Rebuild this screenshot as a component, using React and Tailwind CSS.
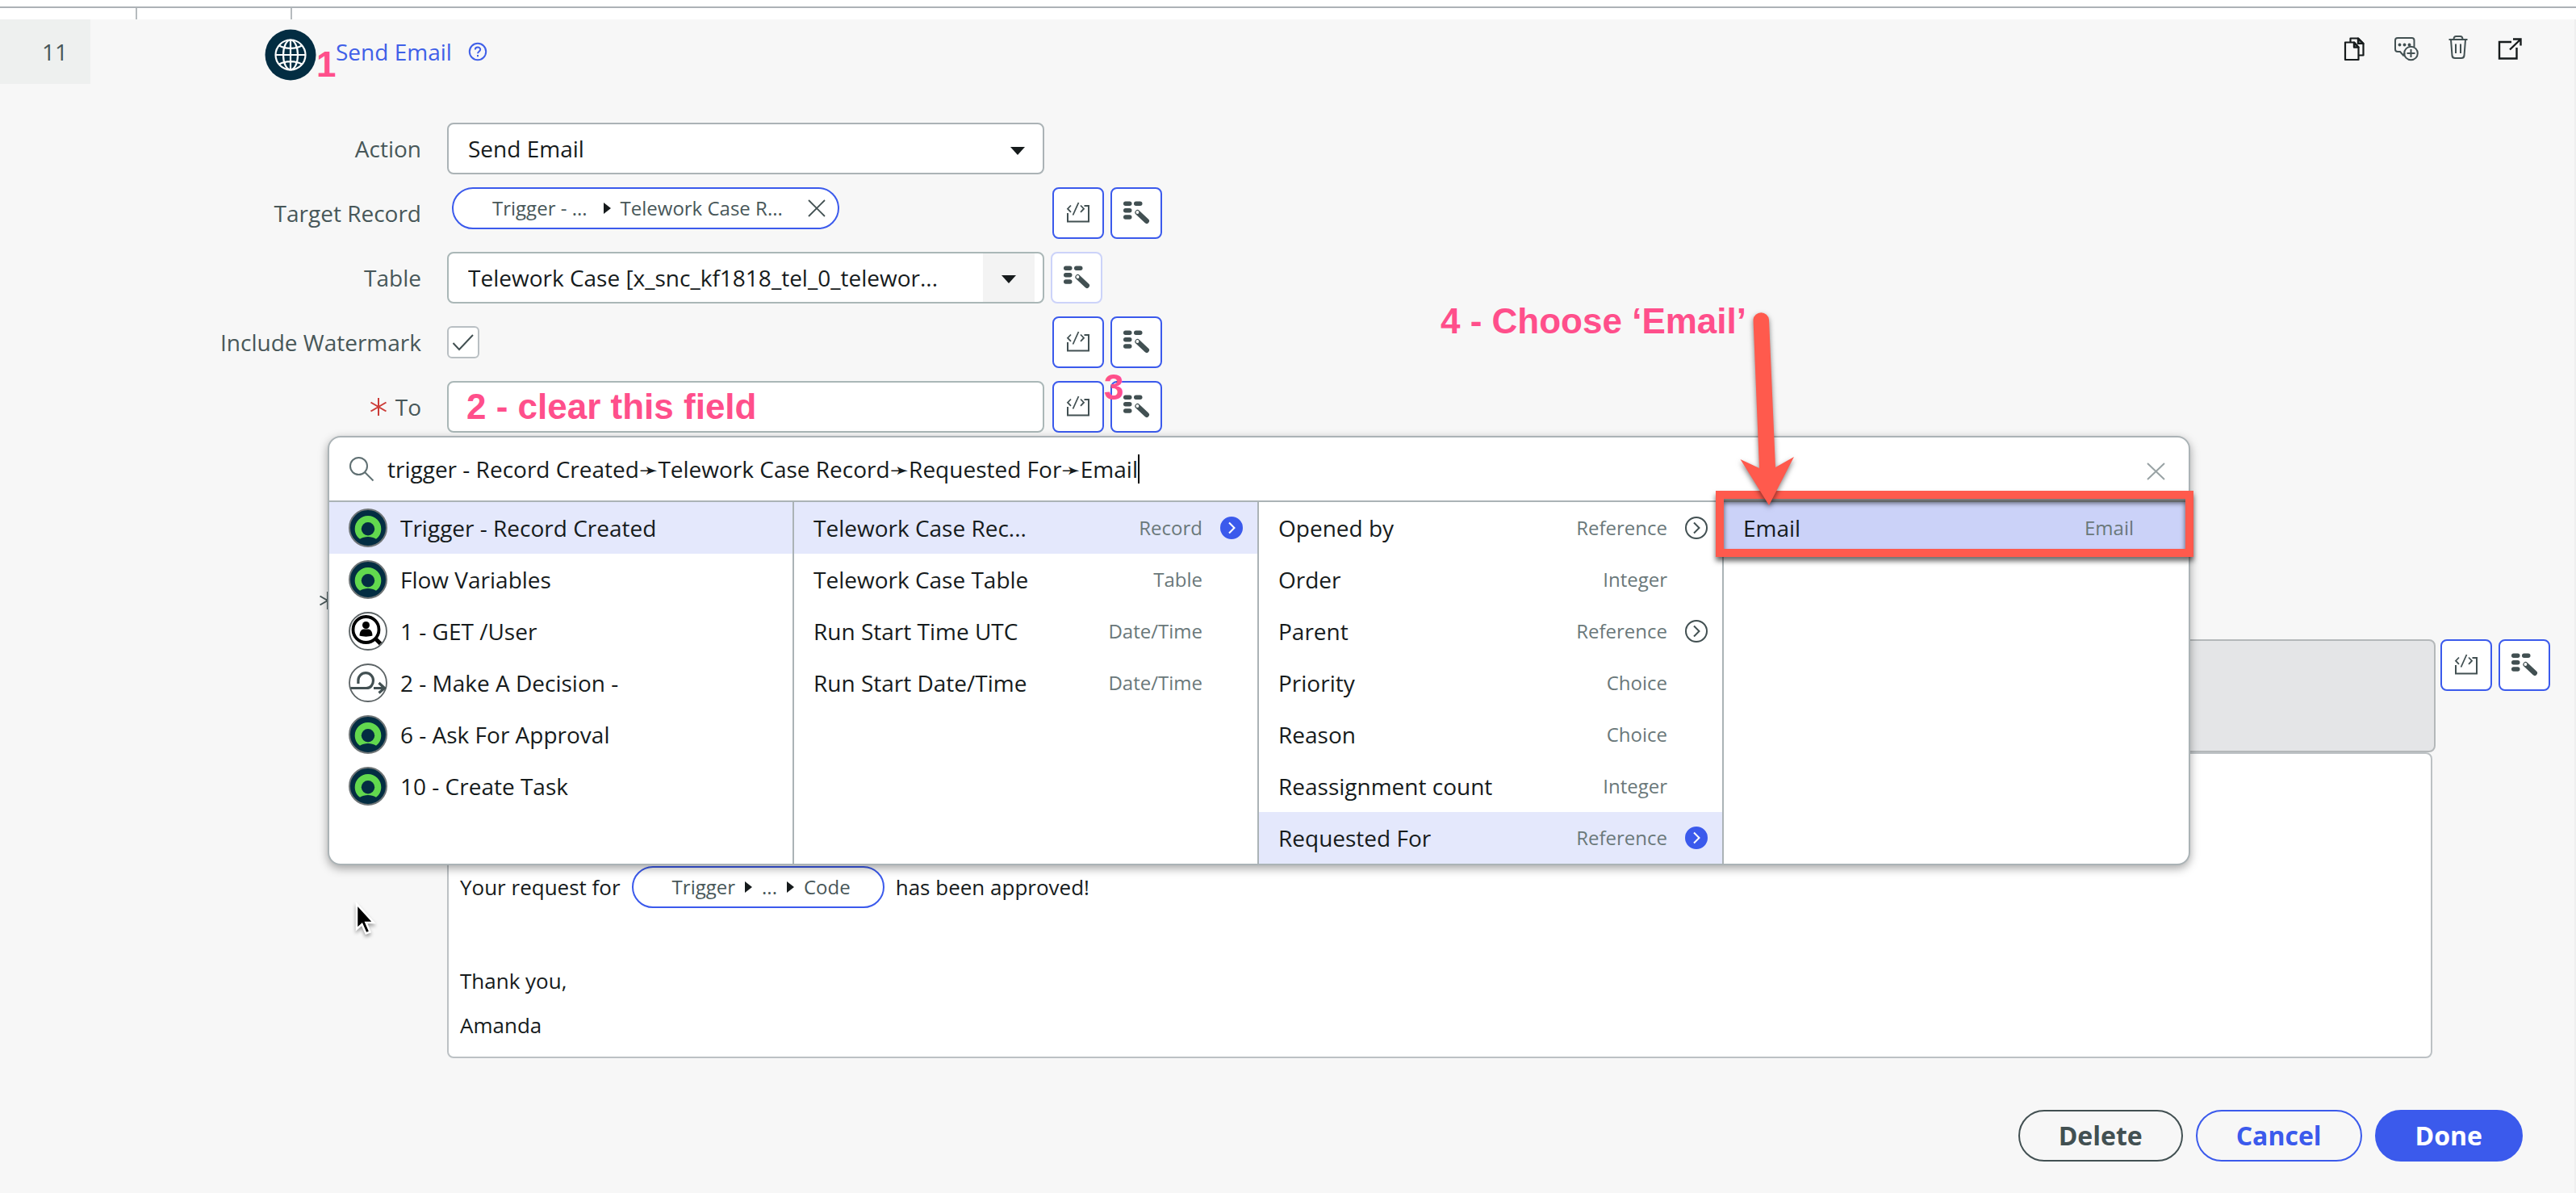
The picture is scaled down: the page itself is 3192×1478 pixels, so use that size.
import React from "react";

const SANS = "font-['Open_Sans','DejaVu_Sans',sans-serif]";
const NOTE = "font-['Liberation_Sans',sans-serif] text-[44px] leading-[44px] font-bold whitespace-nowrap text-[#ff4f8b]";

function CodeIcon() {
  return (
    <svg width="60" height="60" viewBox="2 2 60 60" fill="none" stroke="#425052" strokeWidth="2" aria-hidden="true">
      <path d="M19 32v10.500h26V23h-5.500" />
      <path d="M23 22.500l-4 4.200 4 4.200M35 22.500l4 4.200-4 4.200M32.500 19L25.500 34.500" strokeWidth="1.800" />
    </svg>
  );
}

function PickerIcon() {
  return (
    <svg width="60" height="60" viewBox="2 2 60 60" fill="#425052" aria-hidden="true">
      <rect x="16" y="17.500" width="10.500" height="5.500" rx="2.700" />
      <rect x="29" y="17.500" width="10.500" height="5.500" rx="2.700" />
      <rect x="16" y="26" width="10.500" height="5.500" rx="2.700" />
      <rect x="16" y="34.300" width="10.500" height="5.500" rx="2.700" />
      <path d="M33.600 31.200L44.800 41.800" stroke="#425052" strokeWidth="6.400" strokeLinecap="round" />
      <circle cx="33.400" cy="31" r="1.900" fill="#fff" />
    </svg>
  );
}

function IconButton({ label, pale, children }) {
  return (
    <button
      type="button"
      aria-label={label}
      className={
        "flex size-16 shrink-0 items-center justify-center rounded-lg border-2 bg-white " +
        (pale ? "border-[#ccd3f9]" : "border-[#3b5aec]")
      }
    >
      {children}
    </button>
  );
}

function ToolPair() {
  return (
    <div className="flex gap-2">
      <IconButton label="Toggle scripting"><CodeIcon /></IconButton>
      <IconButton label="Data pill picker"><PickerIcon /></IconButton>
    </div>
  );
}

function Asterisk({ color }) {
  return (
    <svg width="22" height="24" viewBox="0 0 22 24" fill="none" stroke={color} strokeWidth="2" aria-hidden="true">
      <path d="M11 1v22M1.500 6.500l19 11M20.500 6.500l-19 11" />
    </svg>
  );
}

function Triangle() {
  return (
    <svg width="9" height="14" viewBox="0 0 9 14" fill="#161b1c" aria-hidden="true">
      <path d="M0 0l9 7-9 7z" />
    </svg>
  );
}

function Caret() {
  return (
    <svg width="18" height="10" viewBox="0 0 18 10" fill="#161b1c" aria-hidden="true">
      <path d="M0 0h18l-9 10z" />
    </svg>
  );
}

function Row({ label, htmlFor, required, children }) {
  return (
    <div className="grid min-h-16 grid-cols-[522px_1fr] items-center gap-8">
      <div className="flex items-center justify-end gap-2.5">
        {required && <Asterisk color="#cc3b37" />}
        <label htmlFor={htmlFor} className="text-[28px] leading-9 text-[#485759]">{label}</label>
      </div>
      {children}
    </div>
  );
}

function NowLogo() {
  return (
    <svg width="48" height="48" viewBox="0 0 48 48" aria-hidden="true">
      <circle cx="24" cy="24" r="23" fill="#032d42" stroke="#6f7577" strokeWidth="2" />
      <path fill="#62d84e" d="M14 37.800C9.700 35 7.700 30 7.700 25.300a16.300 16.300 0 0 1 32.600 0c0 4.700-2 9.700-6.300 12.500-6-3.700-14-3.700-20 0z" />
      <circle cx="24" cy="25.300" r="8.200" fill="#032d42" />
    </svg>
  );
}

function UserLookupIcon() {
  return (
    <svg width="48" height="48" viewBox="0 0 48 48" aria-hidden="true">
      <circle cx="24" cy="24" r="23" fill="#fff" stroke="#5d6466" strokeWidth="1.800" />
      <circle cx="21.500" cy="22" r="16" fill="none" stroke="#000" strokeWidth="3.800" />
      <path d="M33 33l6.500 6.500" stroke="#000" strokeWidth="5" />
      <circle cx="21.500" cy="16.500" r="4.500" />
      <path d="M13.500 29.500c0-5 2.500-8 5-8h6c2.500 0 5 3 5 8-4 1.500-12 1.500-16 0z" />
    </svg>
  );
}

function DecisionIcon() {
  return (
    <svg width="48" height="48" viewBox="0 0 48 48" fill="none" stroke="#425052" strokeWidth="3.200" aria-hidden="true">
      <circle cx="24" cy="24" r="23" fill="#fff" stroke="#5d6466" strokeWidth="1.800" />
      <path d="M2.500 30.500H22c5 0 8.500-4 8.500-9.500a9.300 9.300 0 0 0-18.600 0v4" />
      <path d="M31 30.500h13M37.500 24l7 6.500-7 6" />
    </svg>
  );
}

function Drill({ filled }) {
  return (
    <svg width="28" height="28" viewBox="0 0 28 28" fill="none" aria-hidden="true">
      <circle cx="14" cy="14" r="13" fill={filled ? "#3b5aec" : "#fff"} stroke={filled ? "#3b5aec" : "#425052"} strokeWidth="2" />
      <path d="M11 7.500l6.500 6.500-6.500 6.500" stroke={filled ? "#fff" : "#425052"} strokeWidth="2" />
    </svg>
  );
}

function Pick({ icon, name, type, drill, tone }) {
  return (
    <button
      type="button"
      className={"flex h-16 w-full items-center pl-6 text-left " + (tone || "")}
    >
      {icon && <span className="mr-4">{icon}</span>}
      <span className="text-[28px] leading-9 text-[#161b1c]">{name}</span>
      <span className="ml-auto text-[24px] leading-8 text-[#6a787a]">{type}</span>
      <span className="mr-[18px] ml-[22px] flex w-7">{drill && <Drill filled={drill === "on"} />}</span>
    </button>
  );
}

const STEPS = [
  { icon: <NowLogo />, name: "Trigger - Record Created", tone: "bg-[#e4e8fc]" },
  { icon: <NowLogo />, name: "Flow Variables" },
  { icon: <UserLookupIcon />, name: "1 - GET /User" },
  { icon: <DecisionIcon />, name: "2 - Make A Decision -" },
  { icon: <NowLogo />, name: "6 - Ask For Approval" },
  { icon: <NowLogo />, name: "10 - Create Task" },
];

const OUTPUTS = [
  { name: "Telework Case Rec...", type: "Record", drill: "on", tone: "bg-[#e4e8fc]" },
  { name: "Telework Case Table", type: "Table" },
  { name: "Run Start Time UTC", type: "Date/Time" },
  { name: "Run Start Date/Time", type: "Date/Time" },
];

const FIELDS = [
  { name: "Opened by", type: "Reference", drill: "off" },
  { name: "Order", type: "Integer" },
  { name: "Parent", type: "Reference", drill: "off" },
  { name: "Priority", type: "Choice" },
  { name: "Reason", type: "Choice" },
  { name: "Reassignment count", type: "Integer" },
  { name: "Requested For", type: "Reference", drill: "on", tone: "bg-[#e4e8fc]" },
];

function Callout() {
  return (
    <>
      <div className="pointer-events-none absolute -top-3.5 -right-1.5 -bottom-1 -left-2.5 border-10 border-[#ff5a4d] drop-shadow-[0_5px_3px_rgba(0,0,0,0.6)]" />
      <svg className="pointer-events-none absolute -top-60 left-4 drop-shadow-[0_3px_3px_rgba(0,0,0,0.5)]" width="80" height="250" viewBox="2152 382 80 250" fill="#ff5a4d" aria-hidden="true">
        <path d="M2172.500 396a9.800 9.800 0 0 1 19.500 0l8 183 23-13-31 60-35.500-57 23.500 11z" />
      </svg>
      <span className={NOTE + " absolute right-full bottom-[266px] -mr-7"}>4 - Choose ‘Email’</span>
    </>
  );
}

function PillPicker() {
  return (
    <div className="absolute top-[516px] right-[476px] left-[406px] rounded-2xl border-2 border-[#abb3b6] bg-white shadow-[0_4px_12px_rgba(0,0,0,0.35)]">
      <div className="flex h-20 items-center border-b-2 border-[#abb3b6] pr-7 pl-6">
        <svg width="32" height="32" viewBox="0 0 32 32" fill="none" stroke="#5f6f72" strokeWidth="2" aria-hidden="true">
          <circle cx="12.500" cy="12.500" r="10.500" />
          <path d="M20 20l10.500 10.500" />
        </svg>
        <input
          aria-label="Search data pills"
          className="ml-4 field-sizing-content text-[28px] leading-9 text-[#161b1c] outline-none"
          defaultValue="trigger - Record Created➛Telework Case Record➛Requested For➛Email"
        />
        <span className="h-9 w-0.5 bg-black" />
        <button type="button" aria-label="Close" className="ml-auto pt-1">
          <svg width="24" height="24" viewBox="0 0 24 24" stroke="#98a2a4" strokeWidth="2" aria-hidden="true">
            <path d="M1 3l21 20M22 3L1 23" />
          </svg>
        </button>
      </div>
      <div className="grid grid-cols-4">
        <div className="border-r-2 border-[#abb3b6]">
          {STEPS.map((s) => <Pick key={s.name} {...s} />)}
        </div>
        <div className="border-r-2 border-[#abb3b6]">
          {OUTPUTS.map((s) => <Pick key={s.name} {...s} />)}
        </div>
        <div className="border-r-2 border-[#abb3b6]">
          {FIELDS.map((s) => <Pick key={s.name} {...s} />)}
        </div>
        <div>
          <div className="relative">
            <Pick name="Email" type="Email" tone="bg-[#cbd2f8]" />
            <Callout />
          </div>
        </div>
      </div>
    </div>
  );
}

const TOOL = "flex size-8 items-center justify-center";

function HeaderTools() {
  return (
    <div className="flex items-start gap-8 pr-16">
      <button type="button" aria-label="Duplicate" className={TOOL}>
        <svg width="28" height="32" viewBox="0 0 28 32" fill="none" stroke="#161b1c" strokeWidth="2.200" strokeLinejoin="round" aria-hidden="true">
          <path d="M2 8.500h11l5.500 6V30H2z" />
          <path d="M13 8.500v6h5.500M8.500 8V3.500h9.500l6.500 6.500v14.500h-6M18 3.500V10h6.500" />
          <path d="M13 8.500l5.500 6H13zM18 3.500l6.500 6.500H18z" fill="#6b7475" />
        </svg>
      </button>
      <button type="button" aria-label="Add annotation" className={TOOL}>
        <svg width="32" height="32" viewBox="0 0 32 32" fill="none" stroke="#425052" strokeWidth="2" aria-hidden="true">
          <path d="M25.500 14V6a3 3 0 0 0-3-3H5a3 3 0 0 0-3 3v11a3 3 0 0 0 3 3h3l4 4.500 2-3" />
          <circle cx="21.500" cy="22" r="8.300" />
          <path d="M21.500 17v10M16.500 22h10" />
          <g fill="#425052" stroke="none"><circle cx="7.500" cy="11.500" r="1.900" /><circle cx="13.500" cy="11.500" r="1.900" /><circle cx="19.500" cy="11.500" r="1.900" /></g>
        </svg>
      </button>
      <button type="button" aria-label="Delete step" className={TOOL}>
        <svg width="28" height="32" viewBox="0 0 28 32" fill="none" stroke="#425052" strokeWidth="2" aria-hidden="true">
          <path d="M2.500 5h23M8.500 5c0-3 1-4 3-4h5c2 0 3 1 3 4M5 5l1.500 20c.3 2 1.500 3 3.500 3h8c2 0 3.200-1 3.500-3L23 5M11 10.500V22M17 10.500V22" />
        </svg>
      </button>
      <button type="button" aria-label="Open in new window" className={TOOL}>
        <svg width="32" height="32" viewBox="0 0 32 32" fill="none" stroke="#161b1c" strokeWidth="2.400" aria-hidden="true">
          <path d="M18 8H3v20.500h21.500V15M16 17.500L29 5M20 4.500h9.500v8" />
        </svg>
      </button>
    </div>
  );
}

export default function App() {
  return (
    <div className={"flex min-h-screen flex-col bg-[#f7f7f7] " + SANS}>
      <div className="h-2 bg-white" />
      <div className="flex h-4 border-t-2 border-[#adb2b6] bg-white">
        <div className="w-[170px] border-r-2 border-[#b6bbbe]" />
        <div className="w-48 border-r-2 border-[#b6bbbe]" />
      </div>

      <main className="relative flex-1 border-r-2 border-[#efefef] pb-9">
        <header className="flex h-20 items-stretch">
          <div className="flex w-28 items-center justify-end bg-[#eef0ef] pr-7 text-[28px] text-[#485759]">11</div>
          <div className="flex flex-1 items-start pt-3 pl-54">
            <div className="relative mr-6">
              <svg width="64" height="64" viewBox="0 0 64 64" fill="none" stroke="#fff" strokeWidth="2.200" aria-hidden="true">
                <circle cx="32" cy="32" r="31.500" fill="#032d42" stroke="none" />
                <circle cx="32" cy="32" r="18.500" />
                <ellipse cx="32" cy="32" rx="9" ry="18.500" />
                <path d="M32 13.500v37M13.500 32h37M18 20.500c8 4.500 20 4.500 28 0M18 43.500c8-4.500 20-4.500 28 0" />
              </svg>
              <span className={NOTE + " absolute top-5.5 left-16"}>1</span>
            </div>
            <a href="#send-email" className="text-[28px] leading-14 text-[#4060e8]">Send Email</a>
            <button type="button" aria-label="Help" className="ml-5 flex h-14 items-center">
              <svg width="24" height="24" viewBox="0 0 24 24" fill="none" stroke="#4060e8" strokeWidth="2" aria-hidden="true">
                <circle cx="12" cy="12" r="10.200" />
                <path d="M8.800 9.600c0-4 6.400-4 6.400-.3 0 2.400-3.200 2.400-3.200 5M12 16v2.200" />
              </svg>
            </button>
          </div>
          <div className="pt-5"><HeaderTools /></div>
        </header>

        <form className="flex flex-col gap-4 pt-12 pr-[30px]">
          <Row label="Action" htmlFor="action">
            <div className="relative w-[740px]">
              <select id="action" className="h-16 w-full appearance-none rounded-lg border-2 border-[#abb3b6] bg-white pr-16 pl-6 text-[28px] text-[#161b1c]">
                <option>Send Email</option>
              </select>
              <span className="pointer-events-none absolute top-7.5 right-6"><Caret /></span>
            </div>
          </Row>

          <Row label="Target Record">
            <div className="flex items-start">
              <div className="w-[750px] pl-1.5">
                <div className="flex h-13 w-120 items-center rounded-full border-2 border-[#3b5aec] bg-white pr-3.5 pl-12 text-[24px] text-[#485759]">
                  <span>Trigger - ...</span>
                  <span className="mx-5 mr-3"><Triangle /></span>
                  <span>Telework Case R...</span>
                  <button type="button" aria-label="Remove pill" className="ml-auto">
                    <svg width="24" height="24" viewBox="0 0 24 24" stroke="#425052" strokeWidth="1.800" aria-hidden="true">
                      <path d="M2 2l20 20M22 2L2 22" />
                    </svg>
                  </button>
                </div>
              </div>
              <ToolPair />
            </div>
          </Row>

          <Row label="Table" htmlFor="table">
            <div className="flex gap-2">
              <div className="relative w-[740px]">
                <select id="table" className="h-16 w-full appearance-none rounded-lg border-2 border-[#aab7b7] bg-white pr-20 pl-6 text-[28px] text-[#161b1c]">
                  <option>Telework Case [x_snc_kf1818_tel_0_telewor...</option>
                </select>
                <span className="pointer-events-none absolute top-0.5 right-3 bottom-0.5 flex w-16 items-center justify-center bg-[#f3f3f3] pt-1"><Caret /></span>
              </div>
              <IconButton label="Data pill picker" pale><PickerIcon /></IconButton>
            </div>
          </Row>

          <Row label="Include Watermark" htmlFor="watermark">
            <div className="flex items-center">
              <div className="relative flex w-[750px]">
                <input id="watermark" type="checkbox" defaultChecked className="size-10 appearance-none rounded-md border-2 border-[#b9bfc3] bg-white" />
                <svg className="pointer-events-none absolute top-2 left-1.5" width="28" height="24" viewBox="0 0 28 24" fill="none" stroke="#425052" strokeWidth="2" aria-hidden="true">
                  <path d="M1.500 13l7.500 8L26 3" />
                </svg>
              </div>
              <ToolPair />
            </div>
          </Row>

          <Row label="To" htmlFor="to" required>
            <div className="flex gap-2.5">
              <div className="relative w-[740px]">
                <input id="to" type="text" className="h-16 w-full rounded-lg border-2 border-[#aab7b7] bg-white px-6" />
                <span className={NOTE + " pointer-events-none absolute top-2.5 left-6"}>2 - clear this field</span>
              </div>
              <div className="relative">
                <ToolPair />
                <span className={NOTE + " pointer-events-none absolute -top-3.5 left-16"}>3</span>
              </div>
            </div>
          </Row>

          <div className="mt-40 flex h-16 items-center pl-[395px]">
            <Asterisk color="#485759" />
          </div>

          <div className="flex gap-1.5 pl-[554px]">
            <div className="flex-1">
              <div className="h-35 rounded-lg border-2 border-[#b4b8ba] bg-[#e4e5e7]" />
              <div className="mr-1 rounded-lg border-2 border-[#bcc1c4] bg-white px-3.5 pt-[137px] pb-[11px] text-[26px] text-[#161b1c]">
                <p className="flex h-14 items-center gap-3.5">
                  <span>Your request for</span>
                  <span className="flex h-13 items-center rounded-full border-2 border-[#3b5aec] bg-white pr-10 pl-12 text-[24px] text-[#485759]">
                    <span>Trigger</span>
                    <span className="mx-3"><Triangle /></span>
                    <span>...</span>
                    <span className="mx-3"><Triangle /></span>
                    <span>Code</span>
                  </span>
                  <span>has been approved!</span>
                </p>
                <p className="mt-[61px] leading-[55px]">Thank you,</p>
                <p className="leading-[55px]">Amanda</p>
              </div>
            </div>
            <ToolPair />
          </div>
        </form>

        <footer className="mt-16 flex justify-end gap-4 pr-16 text-[32px] leading-10 font-bold">
          <button type="button" className="h-16 rounded-full border-2 border-[#425052] px-12 text-[#425052]">Delete</button>
          <button type="button" className="h-16 rounded-full border-2 border-[#3b5aec] px-12 text-[#3b5aec]">Cancel</button>
          <button type="button" className="h-16 rounded-full border-2 border-[#3b5aec] bg-[#3b5aec] px-12 text-white">Done</button>
        </footer>

        <PillPicker />

        <svg className="pointer-events-none absolute top-[1092px] left-[438px] drop-shadow-[0_3px_2px_rgba(0,0,0,0.35)]" width="28" height="44" viewBox="0 0 28 44" aria-hidden="true">
          <path d="M4 4v31l6.500-6 5 11.500 5-2-5-11.500H25z" fill="#000" stroke="#fff" strokeWidth="2.500" />
        </svg>
      </main>
    </div>
  );
}
